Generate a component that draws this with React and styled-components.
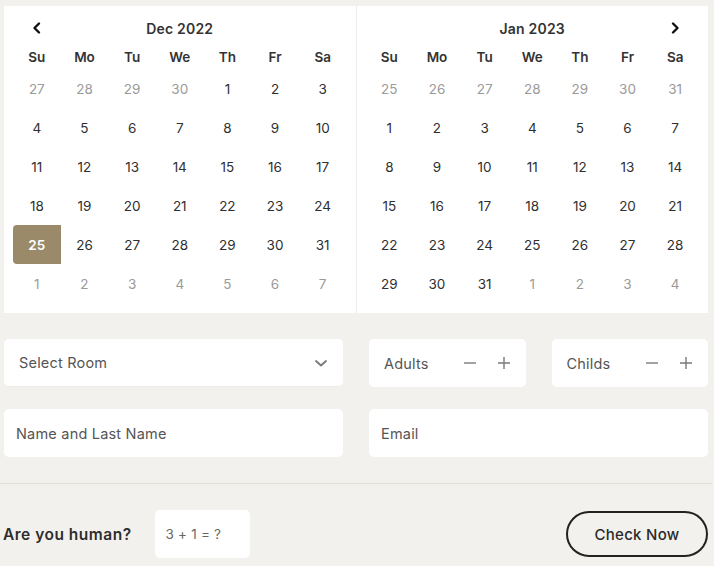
import React from 'react';
import styled, { createGlobalStyle } from 'styled-components';

const GlobalStyle = createGlobalStyle`
  html, body {
    margin: 0;
    padding: 0;
    background: #f3f1ed;
  }
  body {
    font-family: Inter, 'Noto Sans', sans-serif;
    color: #333;
  }
`;

const Page = styled.div`
  width: 704px;
  margin: 0 0 0 4px;
  padding-top: 6px;
`;

const CalendarPanel = styled.div`
  display: flex;
  background: #fff;
`;

const Month = styled.div`
  flex: 1;
  padding: 6px 9px 10px;
  border-right: ${(p) => (p.divider ? '1px solid #eeece8' : 'none')};
`;

const MonthHeader = styled.div`
  display: grid;
  grid-template-columns: 48px 1fr 48px;
  align-items: center;
  height: 32px;
`;

const MonthTitle = styled.div`
  text-align: center;
  font-size: 14px;
  font-weight: 600;
  color: #333;
  letter-spacing: 0.2px;
`;

const NavButton = styled.button`
  display: flex;
  align-items: center;
  justify-content: center;
  border: none;
  background: none;
  padding: 0;
  height: 32px;
  cursor: pointer;
  color: #111;
`;

const Grid = styled.div`
  display: grid;
  grid-template-columns: repeat(7, 1fr);
`;

const WeekDay = styled.div`
  height: 25px;
  display: flex;
  align-items: center;
  justify-content: center;
  font-size: 13.5px;
  font-weight: 600;
  color: #333;
`;

const Day = styled.div`
  height: 39px;
  display: flex;
  align-items: center;
  justify-content: center;
  font-size: 13.5px;
  font-weight: ${(p) => (p.selected ? 600 : 400)};
  color: ${(p) => (p.selected ? '#fff' : p.muted ? '#9a9a9a' : '#2f2f2f')};
  background: ${(p) => (p.selected ? '#9a8a69' : 'transparent')};
  border-radius: ${(p) => (p.selected ? '4px 0 0 4px' : '0')};
`;

const Form = styled.div`
  display: grid;
  grid-template-columns: 1fr 1fr;
  column-gap: 26px;
  row-gap: 22px;
  margin-top: 26px;
`;

const Field = styled.div`
  height: 48px;
  box-sizing: border-box;
  background: #fff;
  border-radius: 5px;
  display: flex;
  align-items: center;
  padding: 0 ${(p) => p.pad || 15}px;
  font-size: 14.5px;
  color: #555;
  letter-spacing: 0.2px;
  border-bottom: ${(p) => (p.line ? '1px solid #ecebe7' : 'none')};
`;

const Grow = styled.span`
  flex: 1;
`;

const CounterRow = styled.div`
  display: flex;
  gap: 26px;
`;

const Counter = styled(Field)`
  flex: 1;
  gap: 20px;
`;

const IconBtn = styled.span`
  display: flex;
  align-items: center;
  color: #7a7a7a;
`;

const Divider = styled.hr`
  border: none;
  border-top: 1px solid #e1ded8;
  margin: 26px -4px 0;
`;

const Bottom = styled.div`
  display: flex;
  align-items: center;
  margin-top: 26px;
`;

const Question = styled.span`
  font-size: 15.5px;
  font-weight: 600;
  color: #2d2d2d;
  margin-left: -1px;
  letter-spacing: 0.5px;
`;

const Captcha = styled(Field)`
  width: 95px;
  margin-left: 23px;
  padding: 0 11px;
  font-size: 13.5px;
  color: #666;
`;

const CheckButton = styled.button`
  margin-left: auto;
  width: 142px;
  height: 46px;
  border: 2px solid #222;
  border-radius: 23px;
  background: transparent;
  font-family: inherit;
  font-size: 15px;
  font-weight: 500;
  color: #2a2a2a;
  letter-spacing: 0.3px;
  cursor: pointer;
`;

const Chevron = ({ dir }) => (
  <svg width="12" height="14" viewBox="0 0 12 14">
    <path
      d={dir === 'left' ? 'M8 2.5 L3.5 7 L8 11.5' : 'M4 2.5 L8.5 7 L4 11.5'}
      fill="none"
      stroke="currentColor"
      strokeWidth="2.4"
      strokeLinecap="round"
      strokeLinejoin="round"
    />
  </svg>
);

const ChevronDown = () => (
  <svg width="14" height="10" viewBox="0 0 14 10">
    <path d="M2 3 L7 7.5 L12 3" fill="none" stroke="#777" strokeWidth="1.8" strokeLinecap="round" strokeLinejoin="round" />
  </svg>
);

const Minus = () => (
  <svg width="14" height="14" viewBox="0 0 14 14">
    <path d="M1 7 H13" stroke="currentColor" strokeWidth="1.4" />
  </svg>
);

const Plus = () => (
  <svg width="14" height="14" viewBox="0 0 14 14">
    <path d="M1 7 H13 M7 1 V13" stroke="currentColor" strokeWidth="1.4" />
  </svg>
);

const weekDays = ['Su', 'Mo', 'Tu', 'We', 'Th', 'Fr', 'Sa'];

const range = (a, b) => Array.from({ length: b - a + 1 }, (_, i) => a + i);

const months = [
  {
    title: 'Dec 2022',
    nav: 'left',
    days: [
      ...range(27, 30).map((d) => ({ d, muted: true })),
      ...range(1, 31).map((d) => ({ d, selected: d === 25 })),
      ...range(1, 7).map((d) => ({ d, muted: true })),
    ],
  },
  {
    title: 'Jan 2023',
    nav: 'right',
    days: [
      ...range(25, 31).map((d) => ({ d, muted: true })),
      ...range(1, 31).map((d) => ({ d })),
      ...range(1, 4).map((d) => ({ d, muted: true })),
    ],
  },
];

function MonthView({ month, divider }) {
  return (
    <Month divider={divider}>
      <MonthHeader>
        {month.nav === 'left' ? (
          <NavButton>
            <Chevron dir="left" />
          </NavButton>
        ) : (
          <span />
        )}
        <MonthTitle>{month.title}</MonthTitle>
        {month.nav === 'right' ? (
          <NavButton>
            <Chevron dir="right" />
          </NavButton>
        ) : (
          <span />
        )}
      </MonthHeader>
      <Grid>
        {weekDays.map((w) => (
          <WeekDay key={w}>{w}</WeekDay>
        ))}
        {month.days.map((day, i) => (
          <Day key={i} muted={day.muted} selected={day.selected}>
            {day.d}
          </Day>
        ))}
      </Grid>
    </Month>
  );
}

export default function App() {
  return (
    <>
      <GlobalStyle />
      <Page>
        <CalendarPanel>
          <MonthView month={months[0]} divider />
          <MonthView month={months[1]} />
        </CalendarPanel>

        <Form>
          <Field line>
            <Grow>Select Room</Grow>
            <ChevronDown />
          </Field>
          <CounterRow>
            <Counter>
              <Grow>Adults</Grow>
              <IconBtn><Minus /></IconBtn>
              <IconBtn><Plus /></IconBtn>
            </Counter>
            <Counter>
              <Grow>Childs</Grow>
              <IconBtn><Minus /></IconBtn>
              <IconBtn><Plus /></IconBtn>
            </Counter>
          </CounterRow>
          <Field pad={12}>Name and Last Name</Field>
          <Field pad={12}>Email</Field>
        </Form>

        <Divider />

        <Bottom>
          <Question>Are you human?</Question>
          <Captcha>3 + 1 = ?</Captcha>
          <CheckButton>Check Now</CheckButton>
        </Bottom>
      </Page>
    </>
  );
}
